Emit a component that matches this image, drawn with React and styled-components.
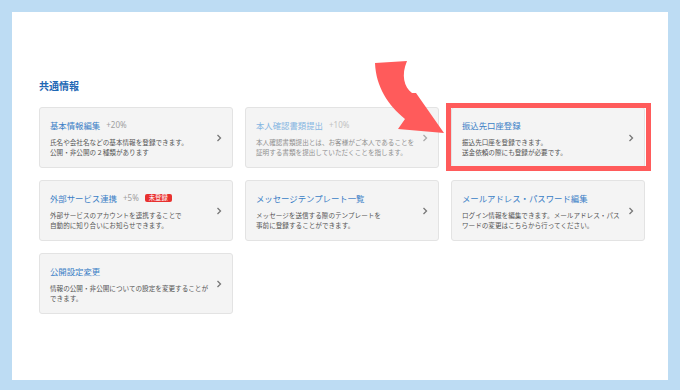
import React from "react";
import styled, { createGlobalStyle, css } from "styled-components";

const GlobalStyle = createGlobalStyle`
    html, body {
        margin: 0;
        padding: 0;
        background: #bddcf3;
    }
    body {
        font-family: "Noto Sans", "Noto Sans CJK JP", sans-serif;
    }
`;

// white sheet inside the blue frame
const Sheet = styled.div`
    position: relative;
    box-sizing: border-box;
    width: 656px;
    height: 368px;
    margin: 12px;
    background: #fff;
    padding: 67px 0 0 27px;
`;

const SectionTitle = styled.h2`
    margin: 0 0 14px;
    font-size: 10px;
    line-height: 14px;
    font-weight: 700;
    color: #1f68b5;
    font-family: "Noto Sans CJK JP", sans-serif;
`;

const Grid = styled.div`
    display: grid;
    grid-template-columns: repeat(3, 194px);
    grid-auto-rows: 61px;
    column-gap: 12px;
    row-gap: 12px;
`;

const Card = styled.div`
    position: relative;
    box-sizing: border-box;
    display: flex;
    align-items: center;
    padding: 0 10px;
    background: #f4f4f4;
    border: 1px solid #e3e3e3;
    border-radius: 3px;

    ${({ $highlight }) =>
        $highlight &&
        css`
            &::after {
                content: "";
                position: absolute;
                left: -6px;
                top: -5px;
                right: -7px;
                bottom: -4px;
                border: 5px solid #ff5b5b;
                pointer-events: none;
            }
        `}
`;

const Body = styled.div`
    flex: 1;
    display: flex;
    flex-direction: column;
    gap: 6px;
`;

const TitleRow = styled.div`
    display: flex;
    align-items: center;
    gap: 6px;
    height: 12px;
`;

const Title = styled.span`
    font-family: "Noto Sans CJK JP", sans-serif;
    font-size: 8.4px;
    line-height: 12px;
    color: ${({ $faded }) => ($faded ? "#86b6e2" : "#3a7ec6")};
`;

const Bonus = styled.span`
    font-family: "Noto Sans", sans-serif;
    font-size: 8px;
    color: ${({ $faded }) => ($faded ? "#c2c2c2" : "#a0a0a0")};
`;

const Badge = styled.span`
    font-family: "Noto Sans CJK JP", sans-serif;
    font-size: 6.3px;
    line-height: 8px;
    padding: 0 4px;
    border-radius: 2px;
    background: #e8312f;
    color: #fff;
`;

const Desc = styled.p`
    margin: 0;
    font-family: "Noto Sans CJK JP", sans-serif;
    font-size: 6.6px;
    line-height: 10px;
    color: ${({ $faded }) => ($faded ? "#909090" : "#555")};
    white-space: pre-line;
`;

const Chevron = ({ faded }) => (
    <svg width="6" height="8" viewBox="0 0 6 8" style={{ flex: "none" }}>
        <polyline
            points="1.5,1 4.5,4 1.5,7"
            fill="none"
            stroke={faded ? "#aaa" : "#777"}
            strokeWidth="1.3"
        />
    </svg>
);

// big red arrow pointing to the highlighted card
const ArrowOverlay = styled.svg`
    position: absolute;
    left: 348px;
    top: 43px;
    pointer-events: none;
`;

const items = [
    {
        title: "基本情報編集",
        bonus: "+20%",
        desc: "氏名や会社名などの基本情報を登録できます。\n公開・非公開の２種類があります",
    },
    {
        title: "本人確認書類提出",
        bonus: "+10%",
        desc: "本人確認書類提出とは、お客様がご本人であることを\n証明する書類を提出していただくことを指します。",
        faded: true,
    },
    {
        title: "振込先口座登録",
        desc: "振込先口座を登録できます。\n送金依頼の際にも登録が必要です。",
        highlight: true,
    },
    {
        title: "外部サービス連携",
        bonus: "+5%",
        badge: "未登録",
        desc: "外部サービスのアカウントを連携することで\n自動的に知り合いにお知らせできます。",
    },
    {
        title: "メッセージテンプレート一覧",
        desc: "メッセージを送信する際のテンプレートを\n事前に登録することができます。",
    },
    {
        title: "メールアドレス・パスワード編集",
        desc: "ログイン情報を編集できます。メールアドレス・パス\nワードの変更はこちらから行ってください。",
    },
    {
        title: "公開設定変更",
        desc: "情報の公開・非公開についての設定を変更することが\nできます。",
    },
];

export default function App() {
    return (
        <>
            <GlobalStyle />
            <Sheet>
                <SectionTitle>共通情報</SectionTitle>
                <Grid>
                    {items.map((item) => (
                        <Card key={item.title} $highlight={item.highlight}>
                            <Body>
                                <TitleRow>
                                    <Title $faded={item.faded}>{item.title}</Title>
                                    {item.bonus && <Bonus $faded={item.faded}>{item.bonus}</Bonus>}
                                    {item.badge && <Badge>{item.badge}</Badge>}
                                </TitleRow>
                                <Desc $faded={item.faded}>{item.desc}</Desc>
                            </Body>
                            <Chevron faded={item.faded} />
                        </Card>
                    ))}
                </Grid>
                <ArrowOverlay width="100" height="95" viewBox="0 0 100 95">
                    <path
                        d="M15 8 L47 6 C41 20 44 32 52 38 L56 38 L84 78 L38 74 L45 64 C28 50 16 32 15 8 Z"
                        fill="#ff5b5b"
                    />
                </ArrowOverlay>
            </Sheet>
        </>
    );
}
